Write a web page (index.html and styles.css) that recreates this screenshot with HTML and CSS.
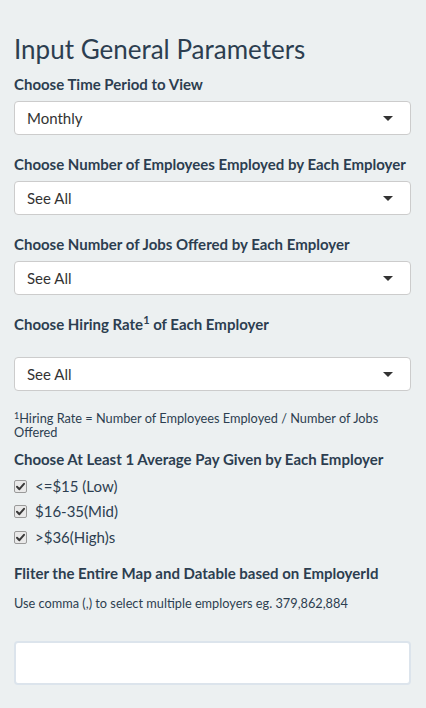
FILE: index.html
```html
<!DOCTYPE html>
<html lang="en">
<head>
<meta charset="utf-8">
<title>Input General Parameters</title>
<link rel="stylesheet" href="styles.css">
</head>
<body>
<div class="well">
  <h3 class="title">Input General Parameters</h3>

  <div class="form-group">
    <label class="control-label">Choose Time Period to View</label>
    <div class="select"><span class="select-value">Monthly</span><span class="caret"></span></div>
  </div>

  <div class="form-group">
    <label class="control-label">Choose Number of Employees Employed by Each Employer</label>
    <div class="select"><span class="select-value">See All</span><span class="caret"></span></div>
  </div>

  <div class="form-group">
    <label class="control-label">Choose Number of Jobs Offered by Each Employer</label>
    <div class="select"><span class="select-value">See All</span><span class="caret"></span></div>
  </div>

  <div class="form-group">
    <label class="control-label label-tall">Choose Hiring Rate<sup class="sup">1</sup> of Each Employer</label>
    <div class="select"><span class="select-value">See All</span><span class="caret"></span></div>
  </div>

  <p class="footnote"><sup class="fn-sup">1</sup>Hiring Rate = Number of Employees Employed / Number of Jobs Offered</p>

  <div class="form-group checks">
    <label class="control-label">Choose At Least 1 Average Pay Given by Each Employer</label>
    <div class="checkbox"><span class="cb"><svg viewBox="0 0 13 13" width="13" height="13"><path d="M3 6.8 L5.4 9.2 L10 3.8" fill="none" stroke="#3a3a3a" stroke-width="2" stroke-linecap="round" stroke-linejoin="round"/></svg></span><span class="cb-text">&lt;=$15 (Low)</span></div>
    <div class="checkbox"><span class="cb"><svg viewBox="0 0 13 13" width="13" height="13"><path d="M3 6.8 L5.4 9.2 L10 3.8" fill="none" stroke="#3a3a3a" stroke-width="2" stroke-linecap="round" stroke-linejoin="round"/></svg></span><span class="cb-text">$16-35(Mid)</span></div>
    <div class="checkbox"><span class="cb"><svg viewBox="0 0 13 13" width="13" height="13"><path d="M3 6.8 L5.4 9.2 L10 3.8" fill="none" stroke="#3a3a3a" stroke-width="2" stroke-linecap="round" stroke-linejoin="round"/></svg></span><span class="cb-text">&gt;$36(High)s</span></div>
  </div>

  <label class="control-label">Fliter the Entire Map and Datable based on EmployerId</label>
  <p class="hint">Use comma (,) to select multiple employers eg. 379,862,884</p>

  <div class="text-input"></div>
</div>
</body>
</html>
```

FILE: styles.css
```css
html, body {
  margin: 0;
  padding: 0;
  background: #ecf0f1;
}

body {
  font-family: Lato, "Open Sans", "Liberation Sans", sans-serif;
  color: #2c3e50;
  font-size: 15px;
  line-height: 1.42857;
}

.well {
  padding: 35px 15px 20px 14px;
  background: #ecf0f1;
}

.title {
  margin: 0 0 10.5px;
  font-size: 26px;
  font-weight: 400;
  line-height: 1.1;
  color: #2c3e50;
}

.control-label {
  display: block;
  font-weight: 700;
  font-size: 15px;
  line-height: 21.4px;
  margin-bottom: 5px;
}

.label-tall {
  margin-bottom: 21.6px;
}

.sup {
  font-size: 11px;
  line-height: 0;
  vertical-align: 6px;
}

.form-group {
  margin-bottom: 19.6px;
}

.select {
  height: 34px;
  box-sizing: border-box;
  border: 1px solid #cccccc;
  border-radius: 4px;
  background: #ffffff;
  display: flex;
  align-items: center;
  justify-content: space-between;
  padding: 0 17px 0 12px;
}

.select-value {
  color: #333333;
  font-size: 15px;
  line-height: 20px;
}

.caret {
  width: 0;
  height: 0;
  border-left: 5px solid transparent;
  border-right: 5px solid transparent;
  border-top: 5px solid #333333;
  margin-top: 1px;
}

.footnote {
  margin: 0 0 10.5px;
  font-size: 12.75px;
  line-height: 14px;
}

.fn-sup {
  font-size: 9px;
  line-height: 0;
  vertical-align: 4px;
}

.checks {
  margin-bottom: 15.2px;
}

.checkbox {
  display: flex;
  align-items: center;
  height: 21px;
}

.checkbox + .checkbox {
  margin-top: 4.5px;
}

.cb {
  width: 13px;
  height: 13px;
  box-sizing: border-box;
  border: 1px solid #9a9a9a;
  border-radius: 2px;
  background: #e9e9e9;
  display: flex;
  align-items: center;
  justify-content: center;
  margin-right: 8px;
  overflow: hidden;
}

.cb svg {
  display: block;
  flex: none;
}

.cb-text {
  font-size: 15px;
  line-height: 21px;
  color: #2c3e50;
}

.hint {
  margin: 0;
  font-size: 12.75px;
  line-height: 18.2px;
  padding-top: 4.5px;
  height: 47.3px;
}

.text-input {
  height: 44px;
  box-sizing: border-box;
  border: 2px solid #dce4ec;
  border-radius: 4px;
  background: #ffffff;
}
```
